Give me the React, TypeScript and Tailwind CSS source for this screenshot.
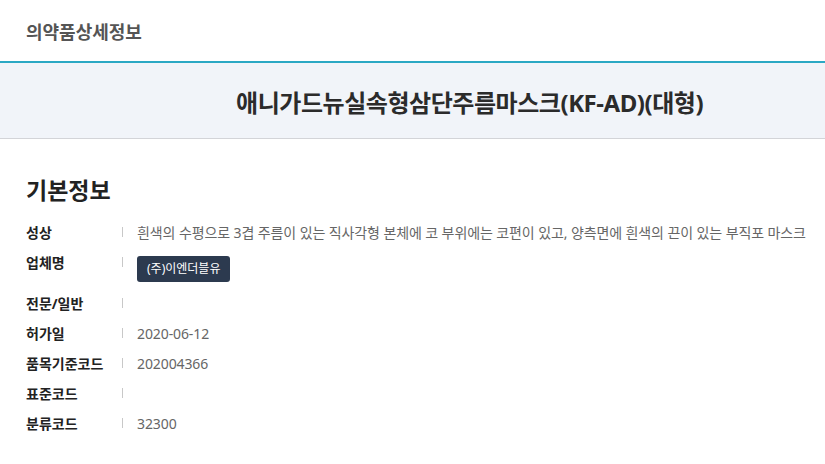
import React from "react";

const rows = [
  {
    label: "성상",
    value:
      "흰색의 수평으로 3겹 주름이 있는 직사각형 본체에 코 부위에는 코편이 있고, 양측면에 흰색의 끈이 있는 부직포 마스크",
  },
  { label: "업체명", badge: "(주)이엔더블유" },
  { label: "전문/일반", value: "" },
  { label: "허가일", value: "2020-06-12" },
  { label: "품목기준코드", value: "202004366" },
  { label: "표준코드", value: "" },
  { label: "분류코드", value: "32300" },
];

const App = () => {
  return (
    <div
      className="w-[825px] h-[464px] bg-white overflow-hidden"
      style={{ fontFamily: '"Noto Sans", "Noto Sans CJK KR", sans-serif' }}
    >
      <div className="h-[63px] flex items-center pt-[3px] px-[26px] border-b-2 border-[#2ba8c4]">
        <h1 className="text-[18px] font-bold text-[#555]">의약품상세정보</h1>
      </div>
      <div className="h-[76px] bg-[#f1f4f9] border-b border-[#d3d4d8] flex items-center pt-[4px] pl-[236px]">
        <h2 className="text-[24px] font-bold text-[#2b2b2b] tracking-[-0.45px] whitespace-nowrap">
          애니가드뉴실속형삼단주름마스크(KF-AD)(대형)
        </h2>
      </div>
      <div className="px-[26px] pt-[36px]">
        <h3 className="text-[23px] font-bold text-[#222] leading-[30px] mb-[13px]">기본정보</h3>
        <div className="flex flex-col">
          {rows.map((row) => (
            <div key={row.label} className="flex items-start py-[5px]">
              <div className="w-[96px] shrink-0 text-[14px] font-bold text-[#222] leading-[20px]">
                {row.label}
              </div>
              <div className="w-[15px] shrink-0 flex pt-[4px]">
                <span className="block w-px h-[10px] bg-[#c8c8c8]" />
              </div>
              {row.badge ? (
                <div className="my-[2px]">
                  <span className="inline-flex items-center h-[26px] px-[10px] rounded-[3px] bg-[#2c3a4f] text-white text-[12px]">
                    {row.badge}
                  </span>
                </div>
              ) : (
                <div className="text-[14px] text-[#666] leading-[20px] min-h-[20px] whitespace-nowrap tracking-[-0.1px]">
                  {row.value}
                </div>
              )}
            </div>
          ))}
        </div>
      </div>
    </div>
  );
};

export default App;
